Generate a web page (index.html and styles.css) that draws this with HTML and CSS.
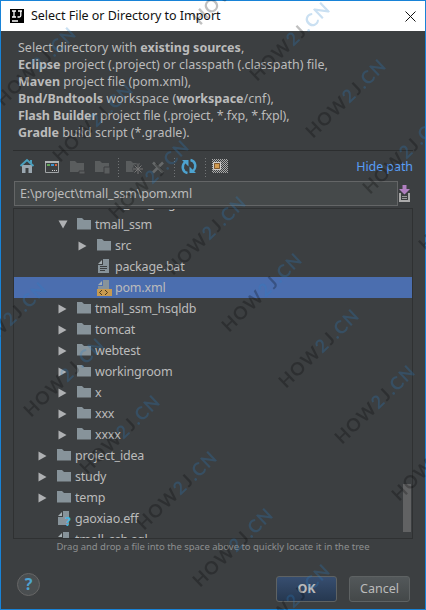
FILE: index.html
```
<!DOCTYPE html>
<html lang="en"><head><meta charset="utf-8"><title>Select File or Directory to Import</title><link rel="stylesheet" href="styles.css"></head>
<body>
<svg width="0" height="0" class="defs">
<defs>
<symbol id="folder" viewBox="0 0 14 12"><path d="M0 0h5l2 2h7v9.500H0z" fill="#87939a"/></symbol>
<symbol id="file" viewBox="0 0 14 15"><path d="M6 0h6v14H1V6h5z" fill="#87939a"/><path d="M1 5l4-4v4z" fill="#a5afb3"/></symbol>
<symbol id="right" viewBox="0 0 9 10"><path d="M.5.500L8.500 5l-8 4.500z" fill="#afb1b3"/></symbol>
<symbol id="down" viewBox="0 0 10 9"><path d="M.5 0.500h9L5 8.500z" fill="#afb1b3"/></symbol>
</defs></svg>
<div class="window">
<header class="title"><svg class="logo" width="14" height="14" viewBox="0 0 14 14"><path d="M0 0h14v14H0z"/><path d="M2 2h4M4 2v6M2 8h4M8 2h4M10.800 2v4.500q0 1.500-1.500 1.500H7.500M2 12h6" fill="none" stroke="#fff" stroke-width="1.300"/></svg><span class="t-title">Select File or Directory to Import</span><svg class="close" width="11" height="11" viewBox="0 0 11 11"><path d="M.5.500l10 10M10.500.500l-10 10" stroke="#111" fill="none"/></svg></header>
<main>
<section class="info"><p>Select directory with <b>existing sources</b>,</p><p><b>Eclipse</b> project (.project) or classpath (.classpath) file,</p><p><b>Maven</b> project file (pom.xml),</p><p><b>Bnd/Bndtools</b> workspace (<b>workspace</b>/cnf),</p><p class="tight"><b>Flash Builder</b> project file (.project, *.fxp, *.fxpl),</p><p><b>Gradle</b> build script (*.gradle).</p></section>
<nav class="toolbar">
<svg width="199" height="24" viewBox="0 0 199 24"><path d="M9 11h10v8h-3.500v-5h-3v5H9z" fill="#9aa7b0"/><path d="M7.500 12L14 6l6.500 6M18 6v3" fill="none" stroke="#499fbd" stroke-width="2"/>
<path d="M32.500 7.500h13v11h-13z" fill="none" stroke="#a0a4a6"/><path d="M32 7h14v2H32z" fill="#b0b4b6"/><path d="M34 10h3v2h-3z" fill="#62a55a"/><path d="M38 10h3v2h-3z" fill="#3f91ce"/><path d="M42 10h2v2h-2z" fill="#d35f3b"/><path d="M39 16h1v1h-1zm2 0h1v1h-1zm2 0h1v1h-1z" fill="#ccc"/>
<g fill="#5a5d5e"><path d="M57 7h5l2 2h7v9H57zM82 7h5l2 2h7v9H82zM113 7h5l2 2h7v9h-14z"/><path d="M66 17h6v3h-6zM91 13h6v7h-6z" stroke="#3c3f41"/></g>
<path d="M121 11l8 8m0-8l-8 8m4-9.500v11M119.500 15h11" stroke="#3c3f41" stroke-width="3"/><path d="M121.500 11.500l7 7m0-7l-7 7m3.500-8.500v10m-5-5h10" stroke="#777"/>
<path d="M140 8.500l10 10m0-10l-10 10" stroke="#66696a" stroke-width="2.600"/>
<g fill="none" stroke="#4da3d0" stroke-width="2.400"><path d="M174.500 19c-5-1-6.500-7-2.500-11M177.500 6c5 1 6.500 7 2.500 11"/></g><path d="M169 6h6.500v6.500zM183 19h-6.500v-6.500z" fill="#4da3d0"/>
<path d="M105.500 4v21M161.500 4v21M192.500 4v21" stroke="#717476" stroke-dasharray="1 2"/></svg>
<svg width="16" height="14" viewBox="0 0 16 14"><defs><pattern id="dots" width="2" height="2" patternUnits="userSpaceOnUse"><path d="M0 0h1v1H0zM1 1h1v1H1z" fill="#aaa"/></pattern></defs><path d="M0 0h16v14H0z" fill="url(#dots)"/><path d="M1.500 3.500h7v7h-7z" fill="#d09a50" stroke="#ccc"/><path d="M2.500 4.500h5v5h-5z" fill="none" stroke="#7a5732"/></svg>
<a class="hide">Hide path</a></nav>
<div class="pathrow"><div class="field">E:\project\tmall_ssm\pom.xml</div><svg width="13" height="18" viewBox="0 0 13 18"><path d="M2 8v8h9V8" fill="none" stroke="#aaa" stroke-width="2"/><path d="M4 11.500h5M4 13.500h5" stroke="#999"/><path d="M4.500 0h4v4H12L6.500 9.500 1 4h3.500z" fill="#b07fc0"/></svg></div>
<div class="tree"><ul>
<li class="d2"><svg class="ar"></svg><svg class="ic"><use href="#folder" width="14" height="12" y="1"/></svg>tmall_ssh_img</li>
<li class="d2"><svg class="ar"><use href="#down" width="10" height="9"/></svg><svg class="ic"><use href="#folder" width="14" height="12" y="1"/></svg>tmall_ssm</li>
<li class="d3"><svg class="ar"><use href="#right" width="9" height="10"/></svg><svg class="ic"><use href="#folder" width="14" height="12" y="1"/></svg>src</li>
<li class="d3"><svg class="ar"></svg><svg class="ic"><use href="#file" width="14" height="15"/><path d="M3 7.500h7M3 9.500h7M3 11.500h5" stroke="#3c3f41"/></svg>package.bat</li>
<li class="d3 sel"><svg class="ar"></svg><svg class="ic"><use href="#file" width="14" height="15"/><path d="M0 9h15v7H0z" fill="#c79a50"/><path d="M5 10L2.500 12.500 5 15M8 10l2.500 2.500L8 15" stroke="#4a3a20" fill="none"/></svg>pom.xml</li>
<li class="d2"><svg class="ar"><use href="#right" width="9" height="10"/></svg><svg class="ic"><use href="#folder" width="14" height="12" y="1"/></svg>tmall_ssm_hsqldb</li>
<li class="d2"><svg class="ar"><use href="#right" width="9" height="10"/></svg><svg class="ic"><use href="#folder" width="14" height="12" y="1"/></svg>tomcat</li>
<li class="d2"><svg class="ar"><use href="#right" width="9" height="10"/></svg><svg class="ic"><use href="#folder" width="14" height="12" y="1"/></svg>webtest</li>
<li class="d2"><svg class="ar"><use href="#right" width="9" height="10"/></svg><svg class="ic"><use href="#folder" width="14" height="12" y="1"/></svg>workingroom</li>
<li class="d2"><svg class="ar"><use href="#right" width="9" height="10"/></svg><svg class="ic"><use href="#folder" width="14" height="12" y="1"/></svg>x</li>
<li class="d2"><svg class="ar"><use href="#right" width="9" height="10"/></svg><svg class="ic"><use href="#folder" width="14" height="12" y="1"/></svg>xxx</li>
<li class="d2"><svg class="ar"><use href="#right" width="9" height="10"/></svg><svg class="ic"><use href="#folder" width="14" height="12" y="1"/></svg>xxxx</li>
<li class="d1"><svg class="ar"><use href="#right" width="9" height="10"/></svg><svg class="ic"><use href="#folder" width="14" height="12" y="1"/></svg>project_idea</li>
<li class="d1"><svg class="ar"><use href="#right" width="9" height="10"/></svg><svg class="ic"><use href="#folder" width="14" height="12" y="1"/></svg>study</li>
<li class="d1"><svg class="ar"><use href="#right" width="9" height="10"/></svg><svg class="ic"><use href="#folder" width="14" height="12" y="1"/></svg>temp</li>
<li class="d1"><svg class="ar"></svg><svg class="ic"><use href="#file" width="14" height="15"/><text x="8" y="15" class="q">?</text></svg>gaoxiao.eff</li>
<li class="d1"><svg class="ar"></svg><svg class="ic"><use href="#file" width="14" height="15"/></svg>tmall_ssh.sql</li>
</ul><i class="thumb"></i></div>
<p class="hint">Drag and drop a file into the space above to quickly locate it in the tree</p>
<footer><span class="help">?</span><span class="btn ok">OK</span><span class="btn">Cancel</span></footer>
</main></div>
<svg class="marks" width="426" height="610" viewBox="0 0 426 610">
<defs><g id="m"><text transform="rotate(-44)" textLength="103">HOW<tspan class="wb">2</tspan>J<tspan class="wb">.CN</tspan></text></g>
<g id="chain"><use href="#m"/><use href="#m" x="57" y="56"/><use href="#m" x="113" y="113"/><use href="#m" x="170" y="169"/><use href="#m" x="226" y="226"/><use href="#m" x="283" y="282"/></g></defs>
<g class="wm"><use href="#chain" x="3" y="107"/><use href="#m" x="342" y="445"/><use href="#m" x="399" y="502"/><use href="#chain" x="200" y="26"/><use href="#chain" x="-26" y="362"/></g>
</svg>
</body></html>
```
FILE: styles.css
```
*{box-sizing:border-box}
body{margin:0;background:#3c3f41;font:12.5px/17px "Noto Sans",sans-serif;color:#bbb;overflow:hidden}
p,ul{margin:0;padding:0;list-style:none}
.defs{position:absolute}
.window{width:426px;height:610px;border:1px solid #1883d7}
.title{height:30px;background:#fff;color:#111;display:flex;align-items:center;padding:0 9px}
.t-title{margin-left:7px;flex:1;letter-spacing:-.03px;line-height:15px;padding-bottom:1px}
main{padding:0 12px}
.info{height:121px;padding:9px 5px;border-bottom:1px solid #2c2e2f;white-space:nowrap;margin-top:-1px}
.info p{letter-spacing:0}
.info .tight{letter-spacing:-.13px}
.toolbar{height:30px;display:flex;align-items:center}
.hide{margin-left:auto;color:#589df6;letter-spacing:-.08px}
.pathrow{display:flex;height:25px;gap:0;padding-left:1px;align-items:center}
.field{width:384px;height:25px;border:1px solid #646667;background:#45494a;padding:3px 5px;letter-spacing:-.14px}
.tree{height:331px;margin-top:2px;border:1px solid #2f3132;overflow:hidden;display:flex;position:relative}
.tree ul{flex:1;margin-top:-16px}
.tree li{height:21px;display:flex;align-items:center;white-space:nowrap;letter-spacing:-.2px}
.d1{padding-left:24px}.d2{padding-left:44px}.d3{padding-left:64px}
.tree .sel{background:#4b6eaf}
.ar{width:10px;height:10px;margin-right:9px}.ic{width:16px;height:16px;margin-right:2px}
.thumb{position:absolute;right:1px;bottom:6px;width:8px;height:48px;background:#616263}
.hint{font-size:9.5px;line-height:15px;text-align:center;color:#8d8f90;letter-spacing:-.02px}
.q{font:bold 12px "Noto Sans",sans-serif;fill:#40b6e0}
footer{display:flex;align-items:center;margin-top:19px;gap:12px}
.help{width:23px;height:23px;border-radius:50%;border:1px solid #666;background:#4a4e50;color:#4da3d0;font:bold 16px/21px "Noto Sans",sans-serif;text-align:center;margin:0 auto 8px 4px}
.btn{width:61px;height:26px;border:1px solid #5e6263;border-radius:3px;background:linear-gradient(#53585a,#444849);text-align:center;line-height:24px;margin-right:3px}
.ok{background:linear-gradient(#374e70,#263850);font-weight:bold;margin-right:0}
.marks{position:absolute;left:0;top:0;pointer-events:none}
.wm{font:bold 18px Lato,sans-serif;fill:#000;opacity:.25}.wb{fill:#2880c8}
```
